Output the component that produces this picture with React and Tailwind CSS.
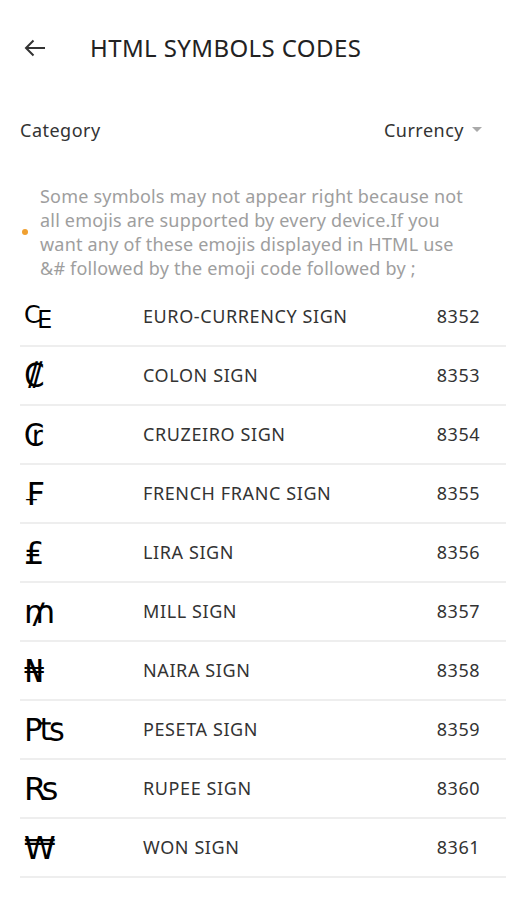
import React from "react";

const rows = [
  ["\u20A0", "EURO-CURRENCY SIGN", "8352"],
  ["\u20A1", "COLON SIGN", "8353"],
  ["\u20A2", "CRUZEIRO SIGN", "8354"],
  ["\u20A3", "FRENCH FRANC SIGN", "8355"],
  ["\u20A4", "LIRA SIGN", "8356"],
  ["\u20A5", "MILL SIGN", "8357"],
  ["\u20A6", "NAIRA SIGN", "8358"],
  ["\u20A7", "PESETA SIGN", "8359"],
  ["\u20A8", "RUPEE SIGN", "8360"],
  ["\u20A9", "WON SIGN", "8361"],
];

export default function App() {
  return (
    <div className="w-[506px] h-[900px] bg-white overflow-hidden" style={{ fontFamily: '"Noto Sans", "Open Sans", sans-serif' }}>
      <div className="h-[96px] flex items-center pl-[24px]">
        <svg width="22" height="18" viewBox="0 0 22 18" className="text-[#333]">
          <path d="M21 9H2M9.5 1.5L2 9l7.5 7.5" fill="none" stroke="currentColor" strokeWidth="2" />
        </svg>
        <div className="ml-[44px] text-[24px] text-[#222] tracking-[0.4px]">HTML SYMBOLS CODES</div>
      </div>
      <div className="h-[68px] flex items-center justify-between pl-[20px] pr-[24px] text-[18px] text-[#333]">
        <span className="tracking-[0.5px]">Category</span>
        <span className="flex items-center tracking-[0.5px]">
          Currency
          <svg width="10" height="6" viewBox="0 0 10 6" className="ml-[8px]">
            <path d="M0 0h10L5 5z" fill="#aaa" />
          </svg>
        </span>
      </div>
      <div className="flex items-center pl-[22px] pt-[20px] pb-[8px]">
        <div className="w-[6px] h-[6px] rounded-full bg-[#f0a030] shrink-0"></div>
        <p className="ml-[12px] w-[442px] text-[18px] leading-[24px] text-[#9e9e9e] tracking-[0.2px]">
          Some symbols may not appear right because not all emojis are supported by every device.If you want any of these emojis displayed in HTML use &amp;# followed by the emoji code followed by ;
        </p>
      </div>
      <div className="ml-[20px]">
        {rows.map(([sym, name, code]) => (
          <div key={code} className="h-[59px] flex items-center border-b-2 border-[#eeeeee]">
            <div className="w-[123px] pl-[4px] text-[32px] text-black leading-none" style={{ fontFamily: '"DejaVu Sans", sans-serif' }}>{sym}</div>
            <div className="flex-1 text-[18px] text-[#333] tracking-[0.6px]">{name}</div>
            <div className="pr-[26px] text-[18px] text-[#333] tracking-[0.5px]">{code}</div>
          </div>
        ))}
      </div>
    </div>
  );
}
